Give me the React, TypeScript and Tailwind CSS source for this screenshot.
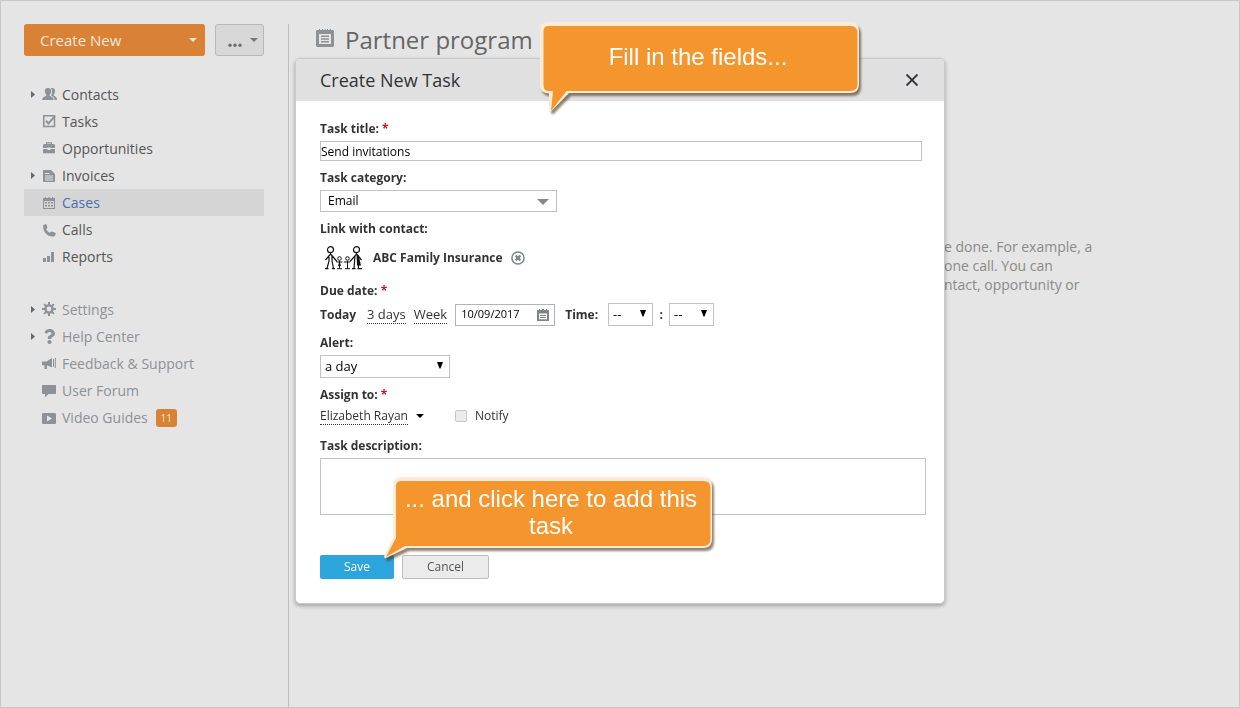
import type { ReactNode } from "react";
import { FaQuestion } from "react-icons/fa";

type NavItem = {
    label: string;
    icon: ReactNode;
    expandable?: boolean;
    active?: boolean;
    badge?: number;
};

function Glyph({ children }: { children: ReactNode }) {
    return (
        <svg width="15" height="15" viewBox="0 0 15 15" fill="currentColor" className="shrink-0">
            {children}
        </svg>
    );
}

const mainItems: NavItem[] = [
    {
        label: "Contacts",
        expandable: true,
        icon: (
            <Glyph>
                <path d="M6 1c2 0 3.200 1.200 3.200 3.200 0 1.500-.6 2.800-1.500 3.500v1c1 .7 3.800 1.300 4.100 4.300H0c.3-3 3.200-3.600 4.300-4.300v-1C3.400 7 2.800 5.700 2.800 4.200 2.800 2.200 4 1 6 1z" />
                <path d="M9 1.200c2.600-.5 4 .8 4 3 0 1.500-.5 2.600-1.300 3.300v.9c.9.7 2.900 1.200 3.300 3.600l-.2 1h-2.200c-.2-2.400-1.800-3.400-3.600-4.400C10.400 6.600 10.600 3.200 9 1.200z" />
            </Glyph>
        ),
    },
    {
        label: "Tasks",
        icon: (
            <Glyph>
                <path d="M1 1h12.300v12.300H1zM2.600 2.600v9.100h9.100V2.600z" fillRule="evenodd" />
                <path d="M4 6.800l2.400 2.600 6.400-7" fill="none" stroke="currentColor" strokeWidth="2" />
            </Glyph>
        ),
    },
    {
        label: "Opportunities",
        icon: (
            <Glyph>
                <path d="M4 3.500V1.300h6v2.200H9V2.400H5v1.100z" />
                <path d="M2 3h10l1 1v3H8.500v-.5h-3V7H1V4z" />
                <path d="M1 8h4.500v1h3V8H13v4.300H1z" />
            </Glyph>
        ),
    },
    {
        label: "Invoices",
        expandable: true,
        icon: (
            <Glyph>
                <path
                    d="M1.500 2H9l4 4v7.500l-.5.5h-11l-.5-.5v-11zM3 5v1h4.500V5zM3 7.500v1h8v-1zM3 9.500v1h8v-1zM3 11.500v1h8v-1z"
                    fillRule="evenodd"
                />
            </Glyph>
        ),
    },
    {
        label: "Cases",
        active: true,
        icon: (
            <Glyph>
                <path
                    d="M1 3h2V2h1v1h2.500V2h1v1H10V2h1v1h2v11H1zM2 6v7h10V6z"
                    fillRule="evenodd"
                />
                <path d="M3 7h2v1.500H3zM6 7h2v1.500H6zM9 7h2v1.500H9zM3 10h2v1.500H3zM6 10h2v1.500H6zM9 10h2v1.500H9z" />
            </Glyph>
        ),
    },
    {
        label: "Calls",
        icon: (
            <Glyph>
                <path d="M1.300 3.200L3.600 2c.5 0 .8.300 1.800 3.200.1.500-.1.700-1.200 1.700.7 1.700 2 3 3.800 3.900 1-1.200 1.300-1.400 1.800-1.200 3.400 1.300 4 1.600 4 2.100l-1.300 2.600C6 16 .2 9.500 1.300 3.200z" />
            </Glyph>
        ),
    },
    {
        label: "Reports",
        icon: (
            <Glyph>
                <path d="M1 9h3v4H1zM5 7h3v6H5zM9 3h3v10H9z" />
            </Glyph>
        ),
    },
];

const helpItems: NavItem[] = [
    {
        label: "Settings",
        expandable: true,
        icon: (
            <Glyph>
                <circle cx="7" cy="7" r="3.600" fill="none" stroke="currentColor" strokeWidth="2.400" />
                <path
                    d="M7 0v3M7 11v3M0 7h3M11 7h3M2.100 2.100l2 2M9.900 9.900l2 2M11.900 2.100l-2 2M4.100 9.900l-2 2"
                    stroke="currentColor"
                    strokeWidth="2"
                />
            </Glyph>
        ),
    },
    { label: "Help Center", expandable: true, icon: <FaQuestion size={15} className="shrink-0" /> },
    {
        label: "Feedback & Support",
        icon: (
            <Glyph>
                <path d="M0 5.500h4.500L10 2v9.500L5 9.200v3.800H2.500V9.200H0z" />
                <path d="M11.500 3.200v7.600M13.300 2v10" stroke="currentColor" strokeWidth="1" fill="none" />
            </Glyph>
        ),
    },
    {
        label: "User Forum",
        icon: (
            <Glyph>
                <path d="M.5 2h13l.5.5v8l-.5.5H6.500L3 14.300V11H.5l-.5-.5v-8z" />
            </Glyph>
        ),
    },
    {
        label: "Video Guides",
        badge: 11,
        icon: (
            <Glyph>
                <path
                    d="M1.500 3h11C13.500 3 14 3.500 14 4.500v8c0 1-.5 1.500-1.500 1.500h-11C.5 14 0 13.500 0 12.500v-8C0 3.500.5 3 1.500 3zM5 5.500v6l5-3z"
                    fillRule="evenodd"
                />
            </Glyph>
        ),
    },
];

function NavList({ items, color }: { items: NavItem[]; color: string }) {
    return (
        <ul className={color}>
            {items.map((item) => (
                <li key={item.label}>
                    <a
                        href="#"
                        className={`flex h-[27px] items-center pl-[7px] text-sm ${item.active ? "bg-[#d5d5d5] text-[#4a6fae]" : ""}`}
                    >
                        <span className="w-[11px] shrink-0 text-[#666]">
                            {item.expandable && (
                                <svg width="4" height="7" viewBox="0 0 4 7" fill="currentColor">
                                    <path d="M0 0l4 3.500-4 3.500z" />
                                </svg>
                            )}
                        </span>
                        <span className="mr-[5px] text-[#8e9196]">{item.icon}</span>
                        {item.label}
                        {item.badge && (
                            <span className="ml-2 h-[18px] w-[21px] rounded-[3px] bg-[#d98236] text-center text-[10px] leading-[19px] text-[#f0e6dc]">
                                {item.badge}
                            </span>
                        )}
                    </a>
                </li>
            ))}
        </ul>
    );
}

function Caret({ className }: { className: string }) {
    return (
        <svg width="8" height="4" viewBox="0 0 8 4" fill="currentColor" className={className}>
            <path d="M0 0h8L4 4z" />
        </svg>
    );
}

function Label({ htmlFor, required, children }: { htmlFor: string; required?: boolean; children: ReactNode }) {
    return (
        <label htmlFor={htmlFor} className="block h-6 text-xs leading-6 font-bold">
            {children}
            {required && <span className="text-[#c8171e]"> *</span>}
        </label>
    );
}

function NativeSelect({ id, label, value, className }: { id: string; label?: string; value: string; className: string }) {
    return (
        <span className={`relative block h-[23px] ${className}`}>
            <select
                id={id}
                aria-label={label}
                className="block h-full w-full appearance-none border border-[#c3c3c3] bg-white pl-1 text-[13px] text-black"
            >
                <option>{value}</option>
            </select>
            <svg width="6" height="7" viewBox="0 0 6 7" className="pointer-events-none absolute top-[7px] right-[7px]">
                <path d="M0 0h6L3.500 6.500h-1z" />
            </svg>
        </span>
    );
}

function FamilyPicture() {
    return (
        <svg width="40" height="24" viewBox="0 0 40 24" fill="none" stroke="#111" strokeWidth="1.200">
            <circle cx="6.500" cy="3.700" r="3" />
            <path d="M6.500 6.500v2M6.500 8.200L1.500 14M7 8.500l6 7M5 9v6l-2 7.500M8 10v5l1.500 7.500M1 22.700h3.500M8 22.700h3" />
            <circle cx="32.500" cy="3.700" r="3" />
            <path d="M32.500 6.500v2M32.500 8.200L26 15.500M33 8.500l4.500 5.500M31 9.500l-1 13M34.500 15v7.500M28 22.700h3.500M33.500 22.700H38" />
            <path d="M32.500 9h2l2.500 10.500h-4z" fill="#111" stroke="none" />
            <circle cx="15.500" cy="12.500" r="1.800" strokeWidth="1" />
            <path d="M15.500 15v7M12.500 16h6M13 22.700h5" strokeWidth="1" />
            <path d="M15.500 15l1.500 5h-3z" fill="#111" stroke="none" />
            <circle cx="23.500" cy="12.500" r="1.800" strokeWidth="1" />
            <path d="M20 16h6M23.500 15v4M23.500 18v4.500M21 22.700h5" strokeWidth="1" />
        </svg>
    );
}

function FieldsCallout() {
    return (
        <div className="absolute top-[-37px] left-[244px] h-[72px] w-[320px]">
            <svg
                width="330"
                height="90"
                viewBox="0 0 330 90"
                className="absolute top-0 left-0 drop-shadow-[2px_3px_1px_rgba(70,45,20,0.6)]"
            >
                <path d="M8 0h302q9 0 9 9v53q0 9-9 9H29L11 89.500 9 88V71.500Q0 71 0 63V9Q0 0 8 0z" fill="#fdebd8" />
                <path d="M8.500 4h302q7 0 7 7v51q0 7-7 7H26.500L11 89l2-20H9q-5.500 0-5.500-6V9q0-5 5-5z" fill="#f4952e" />
            </svg>
            <p className="relative pt-[21px] pr-1 text-center font-['Liberation_Sans',Arial,sans-serif] text-2xl leading-[27px] text-white">
                Fill in the fields...
            </p>
        </div>
    );
}

function SaveCallout() {
    return (
        <div className="absolute top-[418px] left-[97px] h-[72px] w-[320px]">
            <svg
                width="342"
                height="84"
                viewBox="-10 0 342 84"
                className="absolute top-0 left-[-10px] max-w-none drop-shadow-[2px_3px_1px_rgba(70,45,20,0.6)]"
            >
                <path d="M8 0h302q9 0 9 9v53q0 9-9 9H14L-8 81.500l-1-2L0 61V9Q0 0 8 0z" fill="#fdebd8" />
                <path d="M8.500 4h302q7 0 7 7v51q0 7-7 7H12L-7 80 3 61V9q0-5 5.500-5z" fill="#f4952e" />
            </svg>
            <p className="relative pt-2 pr-1 text-center font-['Liberation_Sans',Arial,sans-serif] text-2xl leading-[27px] text-white">
                ... and click here to add this task
            </p>
        </div>
    );
}

function CreateTaskDialog() {
    return (
        <div className="fixed inset-0 flex items-start justify-center pt-[58px]">
            <div
                role="dialog"
                aria-labelledby="dialog-title"
                className="relative w-[650px] rounded-[5px] border border-[#c9c9c9] bg-white text-[#333] shadow-[0_2px_4px_rgba(0,0,0,0.3)]"
            >
                <header className="flex h-[42px] items-center justify-between rounded-t-[4px] bg-[#e0e0e0] pr-[26px] pl-6">
                    <h2 id="dialog-title" className="text-lg">
                        Create New Task
                    </h2>
                    <button aria-label="Close">
                        <svg width="12" height="12" viewBox="0 0 12 12" stroke="#2b2b38" strokeWidth="1.800">
                            <path d="M.5.500l11 11M11.500.500l-11 11" />
                        </svg>
                    </button>
                </header>

                <form className="flex flex-col gap-[5px] pt-4 pr-[18px] pb-6 pl-6" onSubmit={(e) => e.preventDefault()}>
                    <div className="pr-1">
                        <Label htmlFor="title" required>
                            Task title:
                        </Label>
                        <input
                            id="title"
                            type="text"
                            defaultValue="Send invitations"
                            className="block h-5 w-full border border-[#c3c3c3] text-xs text-black"
                        />
                    </div>
                    <div>
                        <Label htmlFor="category">Task category:</Label>
                        <span className="relative block h-[22px] w-[237px]">
                            <select
                                id="category"
                                className="block h-full w-full appearance-none border border-[#c3c3c3] bg-white pl-[7px] text-xs text-black"
                            >
                                <option>Email</option>
                            </select>
                            <svg
                                width="12"
                                height="6"
                                viewBox="0 0 12 6"
                                fill="#85888c"
                                className="pointer-events-none absolute top-[9px] right-2"
                            >
                                <path d="M0 0h12L6 6z" />
                            </svg>
                        </span>
                    </div>
                    <div>
                        <Label htmlFor="unlink">Link with contact:</Label>
                        <div className="flex h-[33px] items-center pl-1 text-xs font-bold">
                            <FamilyPicture />
                            <span className="ml-[9px]">ABC Family Insurance</span>
                            <button id="unlink" type="button" aria-label="Remove contact" className="ml-2">
                                <svg width="14" height="14" viewBox="0 0 14 14" fill="none" stroke="#808388">
                                    <circle cx="7" cy="7" r="6.100" strokeWidth="1.500" />
                                    <path d="M4.600 4.600l4.800 4.800M9.400 4.600L4.600 9.400" strokeWidth="2.200" />
                                </svg>
                            </button>
                        </div>
                    </div>
                    <div>
                        <Label htmlFor="due" required>
                            Due date:
                        </Label>
                        <div className="flex h-[23px] items-center text-xs">
                            <span className="font-bold">Today</span>
                            <a href="#" className="ml-[11px] border-b border-dotted border-[#333] text-[13px] leading-[18px]">
                                3 days
                            </a>
                            <a href="#" className="ml-2 border-b border-dotted border-[#333] text-[13px] leading-[18px]">
                                Week
                            </a>
                            <span className="ml-2 flex h-[22px] w-[100px] items-center border border-[#b0b3b8] pr-[5px] pl-[5px]">
                                <input id="due" type="text" defaultValue="10/09/2017" className="w-full min-w-0 text-[11px] text-black" />
                                <svg width="12" height="12" viewBox="0 0 12 12" className="shrink-0">
                                    <path
                                        d="M0 1h2V0h1v1h2V0h2v1h2V0h1v1h2v11H0zM2 4.500v5.800h8V4.500z"
                                        fill="#808388"
                                        fillRule="evenodd"
                                    />
                                    <path d="M3 6h6v1H3zM3 8h6v1H3z" fill="#808388" />
                                </svg>
                            </span>
                            <label htmlFor="hours" className="ml-[10px] font-bold">
                                Time:
                            </label>
                            <NativeSelect id="hours" value="--" className="ml-[10px] w-[45px]" />
                            <span className="w-4 text-center font-bold">:</span>
                            <NativeSelect id="minutes" label="Minutes" value="--" className="w-[45px]" />
                        </div>
                    </div>
                    <div>
                        <Label htmlFor="alert">Alert:</Label>
                        <NativeSelect id="alert" value="a day" className="w-[130px]" />
                    </div>
                    <div>
                        <Label htmlFor="assignee" required>
                            Assign to:
                        </Label>
                        <div className="flex h-[22px] items-start text-xs">
                            <button id="assignee" type="button" className="flex items-center gap-2">
                                <span className="h-[18px] border-b border-dotted border-[#333] leading-[17px]">Elizabeth Rayan</span>
                                <Caret className="text-black" />
                            </button>
                            <label className="ml-[31px] flex h-[18px] items-center gap-2">
                                <input
                                    type="checkbox"
                                    className="size-3 appearance-none rounded-[2px] border border-[#c6c6c6] bg-[#ececec]"
                                />
                                Notify
                            </label>
                        </div>
                    </div>
                    <div>
                        <Label htmlFor="description">Task description:</Label>
                        <textarea id="description" className="block h-[57px] w-full resize-none border border-[#c3c3c3] text-xs" />
                    </div>
                    <div className="mt-[35px] flex gap-2 text-xs">
                        <button type="submit" className="h-6 w-[74px] rounded-[2px] bg-[#2ca5dc] text-white">
                            Save
                        </button>
                        <button type="button" className="h-6 w-[87px] rounded-[2px] border border-[#bdbdbd] bg-[#ebebeb] text-[#555]">
                            Cancel
                        </button>
                    </div>
                </form>

                <FieldsCallout />
                <SaveCallout />
            </div>
        </div>
    );
}

export default function App() {
    return (
        <div className="flex min-h-screen border border-[#c8c8c8] bg-[#e5e5e5] pt-[23px] pl-[23px] font-['Open_Sans',sans-serif]">
            <aside className="mr-6 w-60 shrink-0">
                <div className="flex gap-[10px]">
                    <button className="flex h-8 flex-1 items-center justify-between rounded-[3px] bg-[#d98236] pr-2 pl-4 text-[15px] text-[#f0e6dc]">
                        Create New
                        <Caret className="text-[#f0e6dc]" />
                    </button>
                    <button
                        aria-label="More actions"
                        className="flex h-8 w-[49px] items-center justify-between rounded-[3px] border border-[#b8b8b8] bg-[#d8d8d8] pr-[5px] pl-3"
                    >
                        <svg width="15" height="14" viewBox="0 0 15 14" fill="#6e6e6e">
                            <circle cx="2" cy="12.200" r="1.700" />
                            <circle cx="7" cy="12.200" r="1.700" />
                            <circle cx="12" cy="12.200" r="1.700" />
                        </svg>
                        <Caret className="text-[#777]" />
                    </button>
                </div>
                <nav className="mt-[25px] flex flex-col gap-[26px]">
                    <NavList items={mainItems} color="text-[#555]" />
                    <NavList items={helpItems} color="text-[#8e9196]" />
                </nav>
            </aside>

            <main className="min-w-0 flex-1 border-l border-[#bdbdbd]">
                <h1 className="flex h-8 items-center gap-[11px] pl-[27px] text-2xl text-[#666]">
                    <svg width="18" height="18" viewBox="0 0 18 18" fill="#8e9196" className="mb-1">
                        <path
                            d="M1 1h2V0h1v1h2V0h1v1h1.500V0h1v1H11V0h1v1h2V0h1v1h2l1 1v15l-1 1H1l-1-1V2zM3 5v10h12V5z"
                            fillRule="evenodd"
                        />
                        <path d="M5 6.500h8V8H5zM5 9.300h8v1.400H5zM5 12h8v1.500H5z" />
                    </svg>
                    Partner program
                </h1>
                <p className="mt-[181px] pl-[655px] text-sm leading-[19px] text-[#8a8a8a]">
                    e done. For example, a
                    <br />
                    one call. You can
                    <br />
                    ntact, opportunity or
                </p>
            </main>

            <CreateTaskDialog />
        </div>
    );
}
